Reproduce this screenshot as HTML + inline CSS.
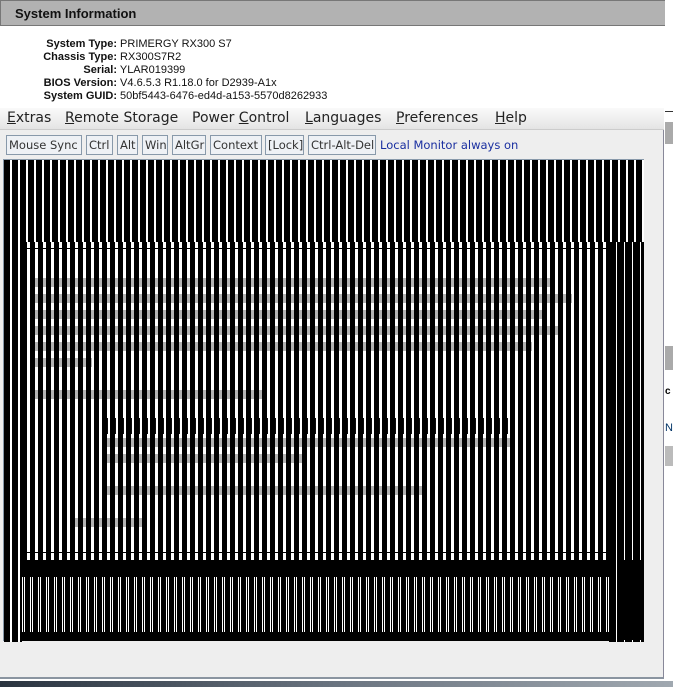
<!DOCTYPE html>
<html><head><meta charset="utf-8"><style>
*{margin:0;padding:0;box-sizing:border-box}
body{width:673px;height:687px;overflow:hidden;background:#fff;font-family:"Liberation Sans",Arial,sans-serif;position:relative}
.abs{position:absolute}
#hdr{left:0;top:0;width:673px;height:26px;background:#b2b2b2;border:1px solid #777;border-right:none}
#hdr span{position:absolute;left:14px;top:5px;font-weight:bold;font-size:13px;color:#111}
.info{font-size:11px;color:#111;line-height:13px}
.info b{display:inline-block;width:117px;text-align:right}
#win{left:0;top:108px;width:664px;height:571px;background:#eee;border-right:1px solid #889;border-bottom:2px solid #8a94a0}
#menu{left:0;top:0;width:664px;height:22px;background:linear-gradient(#fafafa,#e4e4e4);border-bottom:1px solid #ccc;font-family:"DejaVu Sans",sans-serif;font-size:14px;color:#222}
#menu span{position:absolute;top:2px}
#menu u{text-decoration:underline}
.btn{position:absolute;top:27px;height:20px;border:1px solid #8899aa;background:#eef1f5;font-family:"DejaVu Sans",sans-serif;font-size:11.5px;color:#333;padding:2px 2px;white-space:nowrap}
#scr{left:3px;top:159px;width:641px;height:482px;background:#000;border-left:1px solid #8899aa;border-top:1px solid #8899aa}
.s1{background:repeating-linear-gradient(90deg,#000 0,#000 6px,#fff 6px,#fff 8px)}
.s2{background:repeating-linear-gradient(90deg,#000 0,#000 5px,#fff 5px,#fff 8px)}
.s3{background:repeating-linear-gradient(90deg,#fff 0,#fff 1px,#000 1px,#000 2px,#fff 2px,#fff 3px,#000 3px,#000 8px)}
.txt{position:absolute;height:9px;background:rgba(160,160,160,.8);mix-blend-mode:multiply}
#bgr{left:665px;top:0;width:8px;height:687px;background:#fff}
#sky{left:0;top:681px;width:673px;height:6px;background:linear-gradient(90deg,#2a3440,#6a7480,#a0a8b0)}
</style></head><body>
<div id="hdr" class="abs"><span>System Information</span></div>
<div class="abs info" style="left:0;top:38px">
<div><b>System Type:</b> PRIMERGY RX300 S7</div>
<div><b>Chassis Type:</b> RX300S7R2</div>
<div><b>Serial:</b> YLAR019399</div>
<div><b>BIOS Version:</b> V4.6.5.3 R1.18.0 for D2939-A1x</div>
<div><b>System GUID:</b> 50bf5443-6476-ed4d-a153-5570d8262933</div>
</div>
<div id="bgr" class="abs">
<div class="abs" style="left:0;top:111px;width:8px;height:1px;background:#333"></div>
<div class="abs" style="left:0;top:122px;width:8px;height:22px;background:#aaa"></div>
<div class="abs" style="left:0;top:346px;width:8px;height:24px;background:#aaa"></div>
<div class="abs" style="left:0;top:386px;font-size:10px;font-weight:bold">c</div>
<div class="abs" style="left:0;top:422px;font-size:11px;color:#036">N</div>
<div class="abs" style="left:0;top:446px;width:8px;height:20px;background:#bbb"></div>
</div>
<div id="win" class="abs">
<div id="menu" class="abs">
<span style="left:7px"><u>E</u>xtras</span>
<span style="left:65px"><u>R</u>emote Storage</span>
<span style="left:192px">Power <u>C</u>ontrol</span>
<span style="left:305px"><u>L</u>anguages</span>
<span style="left:396px"><u>P</u>references</span>
<span style="left:495px"><u>H</u>elp</span>
</div>
<div class="btn" style="left:6px;width:76px">Mouse Sync</div>
<div class="btn" style="left:86px;width:27px">Ctrl</div>
<div class="btn" style="left:117px;width:21px">Alt</div>
<div class="btn" style="left:142px;width:26px">Win</div>
<div class="btn" style="left:172px;width:34px">AltGr</div>
<div class="btn" style="left:210px;width:52px">Context</div>
<div class="btn" style="left:265px;width:39px">[Lock]</div>
<div class="btn" style="left:308px;width:68px">Ctrl-Alt-Del</div>
<div class="abs" style="left:380px;top:30px;font-family:'DejaVu Sans',sans-serif;font-size:11.5px;color:#1a2fa0">Local Monitor always on</div>
</div>
<div id="scr" class="abs">
<div class="abs s1" style="left:0;top:0;width:640px;height:82px"></div>
<div class="abs s1" style="left:0;top:82px;width:18px;height:400px"></div>
<div class="abs s2" style="left:18px;top:82px;width:602px;height:318px"></div>
<div class="abs" style="left:22px;top:88px;width:585px;height:1px;background:#000"></div>
<div class="abs" style="left:22px;top:392px;width:585px;height:1px;background:#000"></div>
<div class="abs" style="left:98px;top:258px;width:412px;height:16px;background:repeating-linear-gradient(90deg,#000 0,#000 6px,#fff 6px,#fff 8px);opacity:.95"></div>
<div class="txt" style="left:28px;top:118px;width:520px"></div>
<div class="txt" style="left:28px;top:134px;width:540px"></div>
<div class="txt" style="left:28px;top:150px;width:510px"></div>
<div class="txt" style="left:28px;top:166px;width:530px"></div>
<div class="txt" style="left:28px;top:182px;width:500px"></div>
<div class="txt" style="left:28px;top:198px;width:60px"></div>
<div class="txt" style="left:28px;top:230px;width:230px"></div>
<div class="txt" style="left:100px;top:278px;width:410px"></div>
<div class="txt" style="left:100px;top:294px;width:200px"></div>
<div class="txt" style="left:100px;top:326px;width:320px"></div>
<div class="txt" style="left:70px;top:358px;width:70px"></div>
<div class="abs" style="left:18px;top:400px;width:605px;height:17px;background:#000"></div>
<div class="abs s3" style="left:18px;top:417px;width:605px;height:55px"></div>
<div class="abs" style="left:605px;top:82px;width:35px;height:400px;background:repeating-linear-gradient(90deg,#000 0,#000 7px,#fff 7px,#fff 8px)"></div>
<div class="abs" style="left:620px;top:400px;width:20px;height:80px;background:#000"></div>
</div>
<div id="sky" class="abs"></div>
</body></html>
